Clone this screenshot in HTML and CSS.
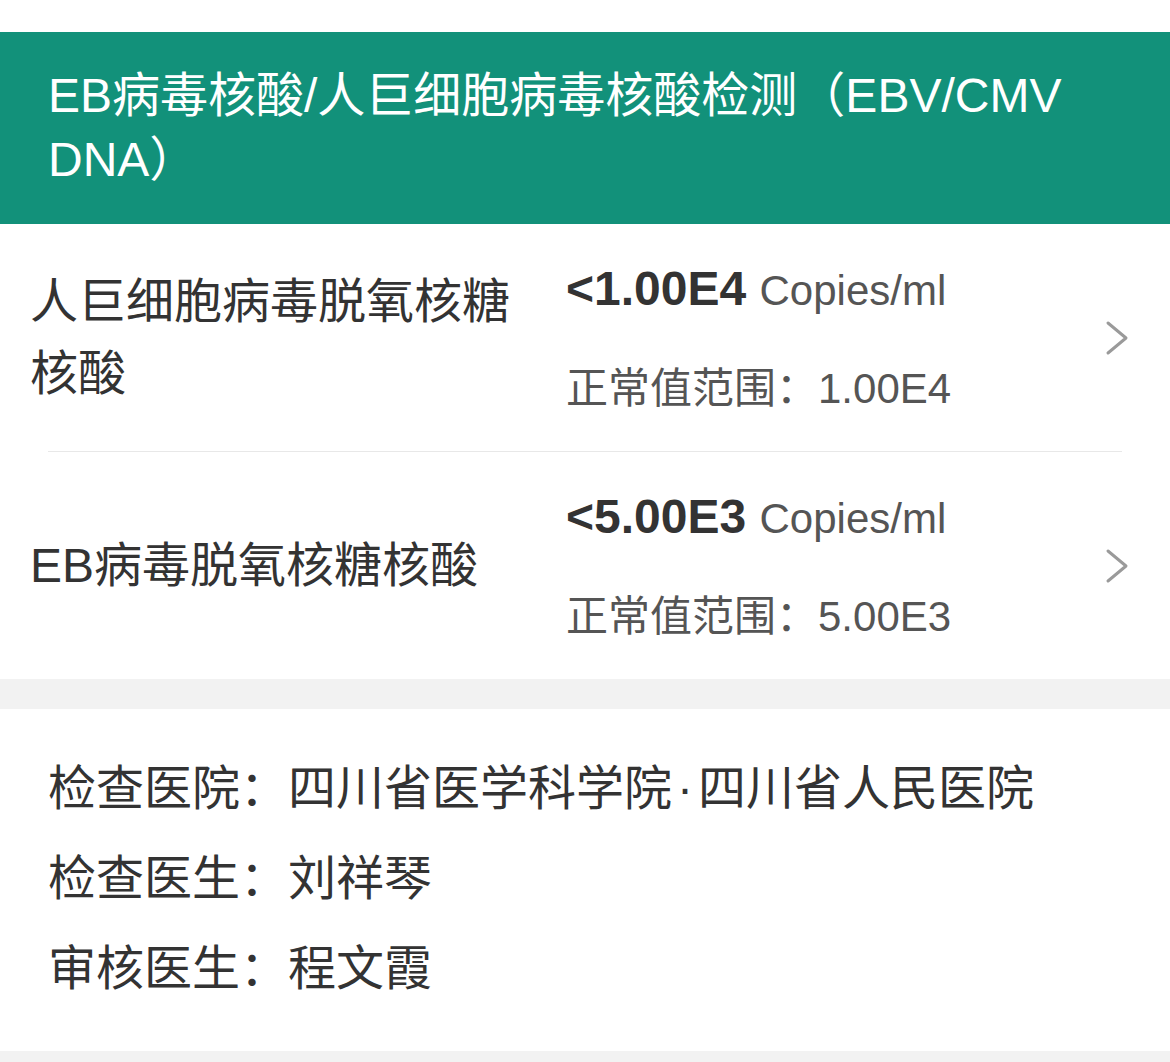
FILE: index.html
```html
<!DOCTYPE html>
<html>
<head>
  <meta charset="utf-8">
  <title>检验报告</title>
  <link rel="stylesheet" href="styles.css">
</head>
<body>

  <div class="topbar"></div>

  <div class="title">EB病毒核酸/人巨细胞病毒核酸检测（EBV/CMV DNA）</div>

  <div class="items">
    <div class="item">
      <div class="item-name">人巨细胞病毒脱氧核糖核酸</div>
      <div class="item-value">
        <div class="result"><b>&lt;1.00E4</b> <span class="unit">Copies/ml</span></div>
        <div class="range">正常值范围：1.00E4</div>
      </div>
      <svg class="arrow" width="26" height="38" viewBox="0 0 26 38">
        <polyline points="4,4 22,19 4,34" fill="none" stroke="#9a9a9a" stroke-width="3" stroke-linecap="round" stroke-linejoin="round"/>
      </svg>
    </div>
    <div class="line"></div>
    <div class="item">
      <div class="item-name">EB病毒脱氧核糖核酸</div>
      <div class="item-value">
        <div class="result"><b>&lt;5.00E3</b> <span class="unit">Copies/ml</span></div>
        <div class="range">正常值范围：5.00E3</div>
      </div>
      <svg class="arrow" width="26" height="38" viewBox="0 0 26 38">
        <polyline points="4,4 22,19 4,34" fill="none" stroke="#9a9a9a" stroke-width="3" stroke-linecap="round" stroke-linejoin="round"/>
      </svg>
    </div>
  </div>

  <div class="info">
    <p>检查医院：四川省医学科学院<span class="dot">·</span>四川省人民医院</p>
    <p>检查医生：刘祥琴</p>
    <p>审核医生：程文霞</p>
  </div>

</body>
</html>
```

FILE: styles.css
```css
body {
  margin: 0;
  font-family: "Liberation Sans", "Noto Sans CJK SC", sans-serif;
  background-color: #f2f2f2;
  color: #333;
}
.topbar {
  height: 32px;
  background-color: white;
}
.title {
  background-color: #12917a;
  color: white;
  font-size: 48px;
  line-height: 64px;
  padding: 32px 50px 32px 48px;
}
.items {
  background-color: white;
  margin-bottom: 30px;
}
.item {
  display: flex;
  align-items: center;
  padding: 36px 40px 36px 30px;
  height: 155px;
}
.item-name {
  width: 500px;
  font-size: 48px;
  line-height: 72px;
}
.item-value {
  flex: 1;
  margin-left: 36px;
}
.result {
  font-size: 48px;
  line-height: 60px;
}
.result b {
  font-weight: bold;
  color: #333;
}
.unit {
  font-size: 42px;
  color: #555;
}
.range {
  margin-top: 40px;
  font-size: 42px;
  line-height: 56px;
  color: #555;
}
.arrow {
  flex-shrink: 0;
}
.line {
  height: 1px;
  background-color: #e8e8e8;
  margin: 0 48px;
}
.info {
  background-color: white;
  padding: 35px 48px 37px 48px;
  margin-bottom: 10px;
}
.info p {
  margin: 0;
  font-size: 48px;
  line-height: 90px;
}
.dot {
  padding: 0 5px;
}
```
